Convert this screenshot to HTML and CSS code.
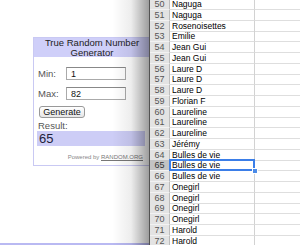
FILE: index.html
```html
<!DOCTYPE html>
<html lang="en">
<head>
    <meta charset="UTF-8">
    <title>Random number draw</title>
    <link rel="stylesheet" href="styles.css">
</head>
<body>
    <div class="screen">
        <div class="page">
            <div class="widget">
                <div class="widget-head">True Random Number<br>Generator</div>
                <div class="widget-body">
                    <div class="field">
                        <label for="min">Min:</label>
                        <input type="text" id="min" value="1">
                    </div>
                    <div class="field">
                        <label for="max">Max:</label>
                        <input type="text" id="max" value="82">
                    </div>
                    <button class="generate">Generate</button>
                    <div class="result-label">Result:</div>
                    <div class="result">65</div>
                    <div class="powered">Powered by <a href="#">RANDOM.ORG</a></div>
                </div>
            </div>
            <div class="next-widget"></div>
        </div>

        <div class="sheet">
            <div class="rows">
                <div class="row"><span class="num">50</span><span class="cell">Naguga</span><span class="cell"></span></div>
                <div class="row"><span class="num">51</span><span class="cell">Naguga</span><span class="cell"></span></div>
                <div class="row"><span class="num">52</span><span class="cell">Rosenoisettes</span><span class="cell"></span></div>
                <div class="row"><span class="num">53</span><span class="cell">Emilie</span><span class="cell"></span></div>
                <div class="row"><span class="num">54</span><span class="cell">Jean Gui</span><span class="cell"></span></div>
                <div class="row"><span class="num">55</span><span class="cell">Jean Gui</span><span class="cell"></span></div>
                <div class="row"><span class="num">56</span><span class="cell">Laure D</span><span class="cell"></span></div>
                <div class="row"><span class="num">57</span><span class="cell">Laure D</span><span class="cell"></span></div>
                <div class="row"><span class="num">58</span><span class="cell">Laure D</span><span class="cell"></span></div>
                <div class="row"><span class="num">59</span><span class="cell">Florian F</span><span class="cell"></span></div>
                <div class="row"><span class="num">60</span><span class="cell">Laureline</span><span class="cell"></span></div>
                <div class="row"><span class="num">61</span><span class="cell">Laureline</span><span class="cell"></span></div>
                <div class="row"><span class="num">62</span><span class="cell">Laureline</span><span class="cell"></span></div>
                <div class="row"><span class="num">63</span><span class="cell">Jérémy</span><span class="cell"></span></div>
                <div class="row"><span class="num">64</span><span class="cell">Bulles de vie</span><span class="cell"></span></div>
                <div class="row selected"><span class="num">65</span><span class="cell active">Bulles de vie<span class="handle"></span></span><span class="cell"></span></div>
                <div class="row"><span class="num">66</span><span class="cell">Bulles de vie</span><span class="cell"></span></div>
                <div class="row"><span class="num">67</span><span class="cell">Onegirl</span><span class="cell"></span></div>
                <div class="row"><span class="num">68</span><span class="cell">Onegirl</span><span class="cell"></span></div>
                <div class="row"><span class="num">69</span><span class="cell">Onegirl</span><span class="cell"></span></div>
                <div class="row"><span class="num">70</span><span class="cell">Onegirl</span><span class="cell"></span></div>
                <div class="row"><span class="num">71</span><span class="cell">Harold</span><span class="cell"></span></div>
                <div class="row"><span class="num">72</span><span class="cell">Harold</span><span class="cell"></span></div>
            </div>
        </div>
    </div>
</body>
</html>
```

FILE: styles.css
```css
* {
    margin: 0;
    padding: 0;
    box-sizing: border-box;
}

body {
    background: #fff;
    font-family: 'Liberation Sans', Arial, sans-serif;
}

.screen {
    display: flex;
    width: 300px;
    height: 245px;
    overflow: hidden;
}

/* left: web page with the widget */
.page {
    flex: none;
    width: 149px;
    display: flex;
    flex-direction: column;
    padding-top: 37px;
    overflow: hidden;
    background: #fff;
}

.widget {
    width: 118px;
    margin-left: 33px;
    border: 1px solid #c9c9f3;
    font-size: 9.5px;
    color: #333;
}

.widget-head {
    height: 19px;
    background-color: #cfcff9;
    text-align: center;
    line-height: 9.5px;
    color: #222;
}

.widget-body {
    padding: 10px 4px 4px 3px;
}

.field {
    display: flex;
    align-items: center;
    margin-bottom: 7px;
}

.field label {
    width: 29px;
    padding-left: 1px;
    color: #555;
}

.field input {
    width: 60px;
    height: 13px;
    border: 1px solid #aaa;
    border-top-color: #888;
    padding: 0 4px;
    font-family: 'Liberation Sans', Arial, sans-serif;
    font-size: 9px;
    color: #111;
    outline: none;
}

.generate {
    display: block;
    width: 46px;
    height: 12px;
    margin: -1px 0 0 2px;
    border: 1px solid #999;
    border-radius: 3px;
    background: linear-gradient(#fff, #e6e6e6);
    font-family: 'Liberation Sans', Arial, sans-serif;
    font-size: 9px;
    line-height: 10px;
    color: #111;
}

.result-label {
    margin-top: 3px;
    height: 10px;
    line-height: 10px;
    padding-left: 1px;
    color: #555;
}

.result {
    height: 15px;
    width: 108px;
    background-color: #cdcdf6;
    font-size: 13px;
    line-height: 15px;
    padding-left: 2px;
    color: #1d1d3a;
}

.powered {
    margin-top: 7px;
    height: 8px;
    line-height: 8px;
    text-align: right;
    padding-right: 3px;
    font-size: 6px;
    color: #888;
}

.powered a {
    color: #777;
}

.next-widget {
    margin-top: auto;
    height: 2px;
    background-color: #b9b9f2;
}

/* right: spreadsheet window */
.sheet {
    flex: 1;
    position: relative;
    z-index: 1;
    background: #fff;
    border-left: 1px solid #888;
}

.sheet::before {
    content: '';
    position: absolute;
    top: 0;
    bottom: 0;
    right: 100%;
    width: 38px;
    background: linear-gradient(to right, rgba(0, 0, 0, 0), rgba(0, 0, 0, 0.07) 50%, rgba(0, 0, 0, 0.4));
}

.rows {
    margin-top: -1px;
}

.row {
    display: grid;
    grid-template-columns: 20px 85px 1fr;
    height: 10.75px;
    font-size: 8.5px;
    line-height: 10px;
}

.num {
    background-color: #e3e3e3;
    border-right: 1px solid #bcbcbc;
    border-bottom: 1px solid #f2f2f2;
    text-align: center;
    font-size: 9px;
    color: #555;
}

.cell {
    border-bottom: 1px solid #dedede;
    padding-left: 2px;
    color: #000;
    white-space: nowrap;
}

.cell:nth-child(2) {
    border-right: 1px solid #d2d2d2;
}

.selected .num {
    background-color: #c3c3c3;
    color: #333;
}

.active {
    position: relative;
}

.active::after {
    content: '';
    position: absolute;
    top: -1px;
    left: -1px;
    right: -1px;
    bottom: -1px;
    border: 2px solid #3b7ee8;
}

.handle {
    position: absolute;
    right: -4px;
    bottom: -4px;
    width: 6px;
    height: 6px;
    background-color: #4b8be8;
    border: 1px solid #fff;
    z-index: 1;
}
```
